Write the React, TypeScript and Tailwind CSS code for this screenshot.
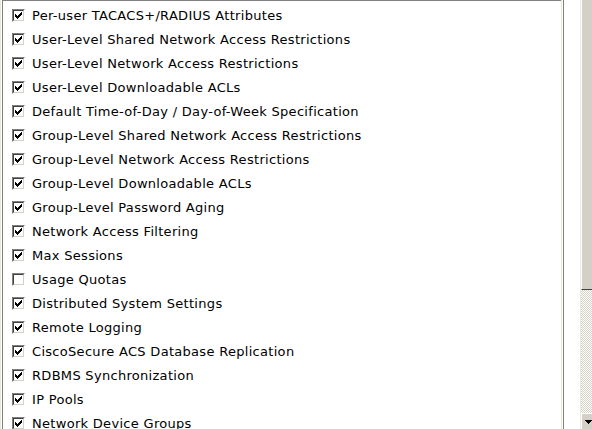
import React from "react";

const items: [string, boolean][] = [
  ["Per-user TACACS+/RADIUS Attributes", true],
  ["User-Level Shared Network Access Restrictions", true],
  ["User-Level Network Access Restrictions", true],
  ["User-Level Downloadable ACLs", true],
  ["Default Time-of-Day / Day-of-Week Specification", true],
  ["Group-Level Shared Network Access Restrictions", true],
  ["Group-Level Network Access Restrictions", true],
  ["Group-Level Downloadable ACLs", true],
  ["Group-Level Password Aging", true],
  ["Network Access Filtering", true],
  ["Max Sessions", true],
  ["Usage Quotas", false],
  ["Distributed System Settings", true],
  ["Remote Logging", true],
  ["CiscoSecure ACS Database Replication", true],
  ["RDBMS Synchronization", true],
  ["IP Pools", true],
  ["Network Device Groups", true],
];

const checkPixels = [
  [6, 0],
  [5, 1], [6, 1],
  [0, 2], [4, 2], [5, 2], [6, 2],
  [0, 3], [1, 3], [3, 3], [4, 3], [5, 3],
  [0, 4], [1, 4], [2, 4], [3, 4], [4, 4],
  [1, 5], [2, 5], [3, 5],
  [2, 6],
];

function CheckBox({ checked }: { checked: boolean }) {
  return (
    <span className="flex w-[13px] h-[13px] border border-t-[#808080] border-l-[#808080] border-b-white border-r-white shrink-0">
      <span className="flex w-[11px] h-[11px] border border-t-[#404040] border-l-[#404040] border-b-[#d4d0c8] border-r-[#d4d0c8] bg-white items-center justify-center">
        {checked && (
          <svg width="7" height="7" viewBox="0 0 7 7" shapeRendering="crispEdges">
            {checkPixels.map(([x, y], i) => (
              <rect key={i} x={x} y={y} width="1" height="1" fill="#000" />
            ))}
          </svg>
        )}
      </span>
    </span>
  );
}

export default function App() {
  return (
    <div className="flex w-[592px] h-[429px] bg-white overflow-hidden" style={{ fontFamily: '"DejaVu Sans", Verdana, sans-serif' }}>
      <div className="w-[1px] h-full bg-[#ece9d8]" />
      <div className="w-[1px] h-full bg-white" />
      <div className="flex flex-col w-[559px] h-full border-l border-t border-[#808080]">
        <div className="flex flex-col pt-[2px] pl-[9px]">
          {items.map(([label, checked]) => (
            <div key={label} className="flex items-center h-[24px]">
              <CheckBox checked={checked} />
              <span className="ml-[7px] text-[13px] tracking-[0.3px] leading-none text-black whitespace-nowrap pt-[1px]">{label}</span>
            </div>
          ))}
        </div>
      </div>
      <div className="w-[1px] h-full bg-[#ece9d8]" />
      <div className="w-[1px] h-full bg-white" />
      <div className="w-[1px] h-full bg-[#808080]" />
      <div className="w-[16px] h-full bg-white" />
      <div className="w-[1px] h-full bg-[#ece9d8]" />
      <div className="flex flex-col flex-1 h-full">
        <div className="h-[290px] bg-[#d4d0c8] border-b border-[#404040] border-l border-l-white" />
        <div className="flex-1 bg-[repeating-conic-gradient(#d4d0c8_0_25%,#ffffff_0_50%)] bg-[length:2px_2px]" />
        <div className="h-[16px] bg-[#d4d0c8] border-t border-l border-t-white border-l-white flex items-start pl-[3px] pt-[6px]">
          <svg width="7" height="4" viewBox="0 0 7 4" shapeRendering="crispEdges">
            <rect x="0" y="0" width="7" height="1" fill="#000" />
            <rect x="1" y="1" width="5" height="1" fill="#000" />
            <rect x="2" y="2" width="3" height="1" fill="#000" />
            <rect x="3" y="3" width="1" height="1" fill="#000" />
          </svg>
        </div>
      </div>
    </div>
  );
}
